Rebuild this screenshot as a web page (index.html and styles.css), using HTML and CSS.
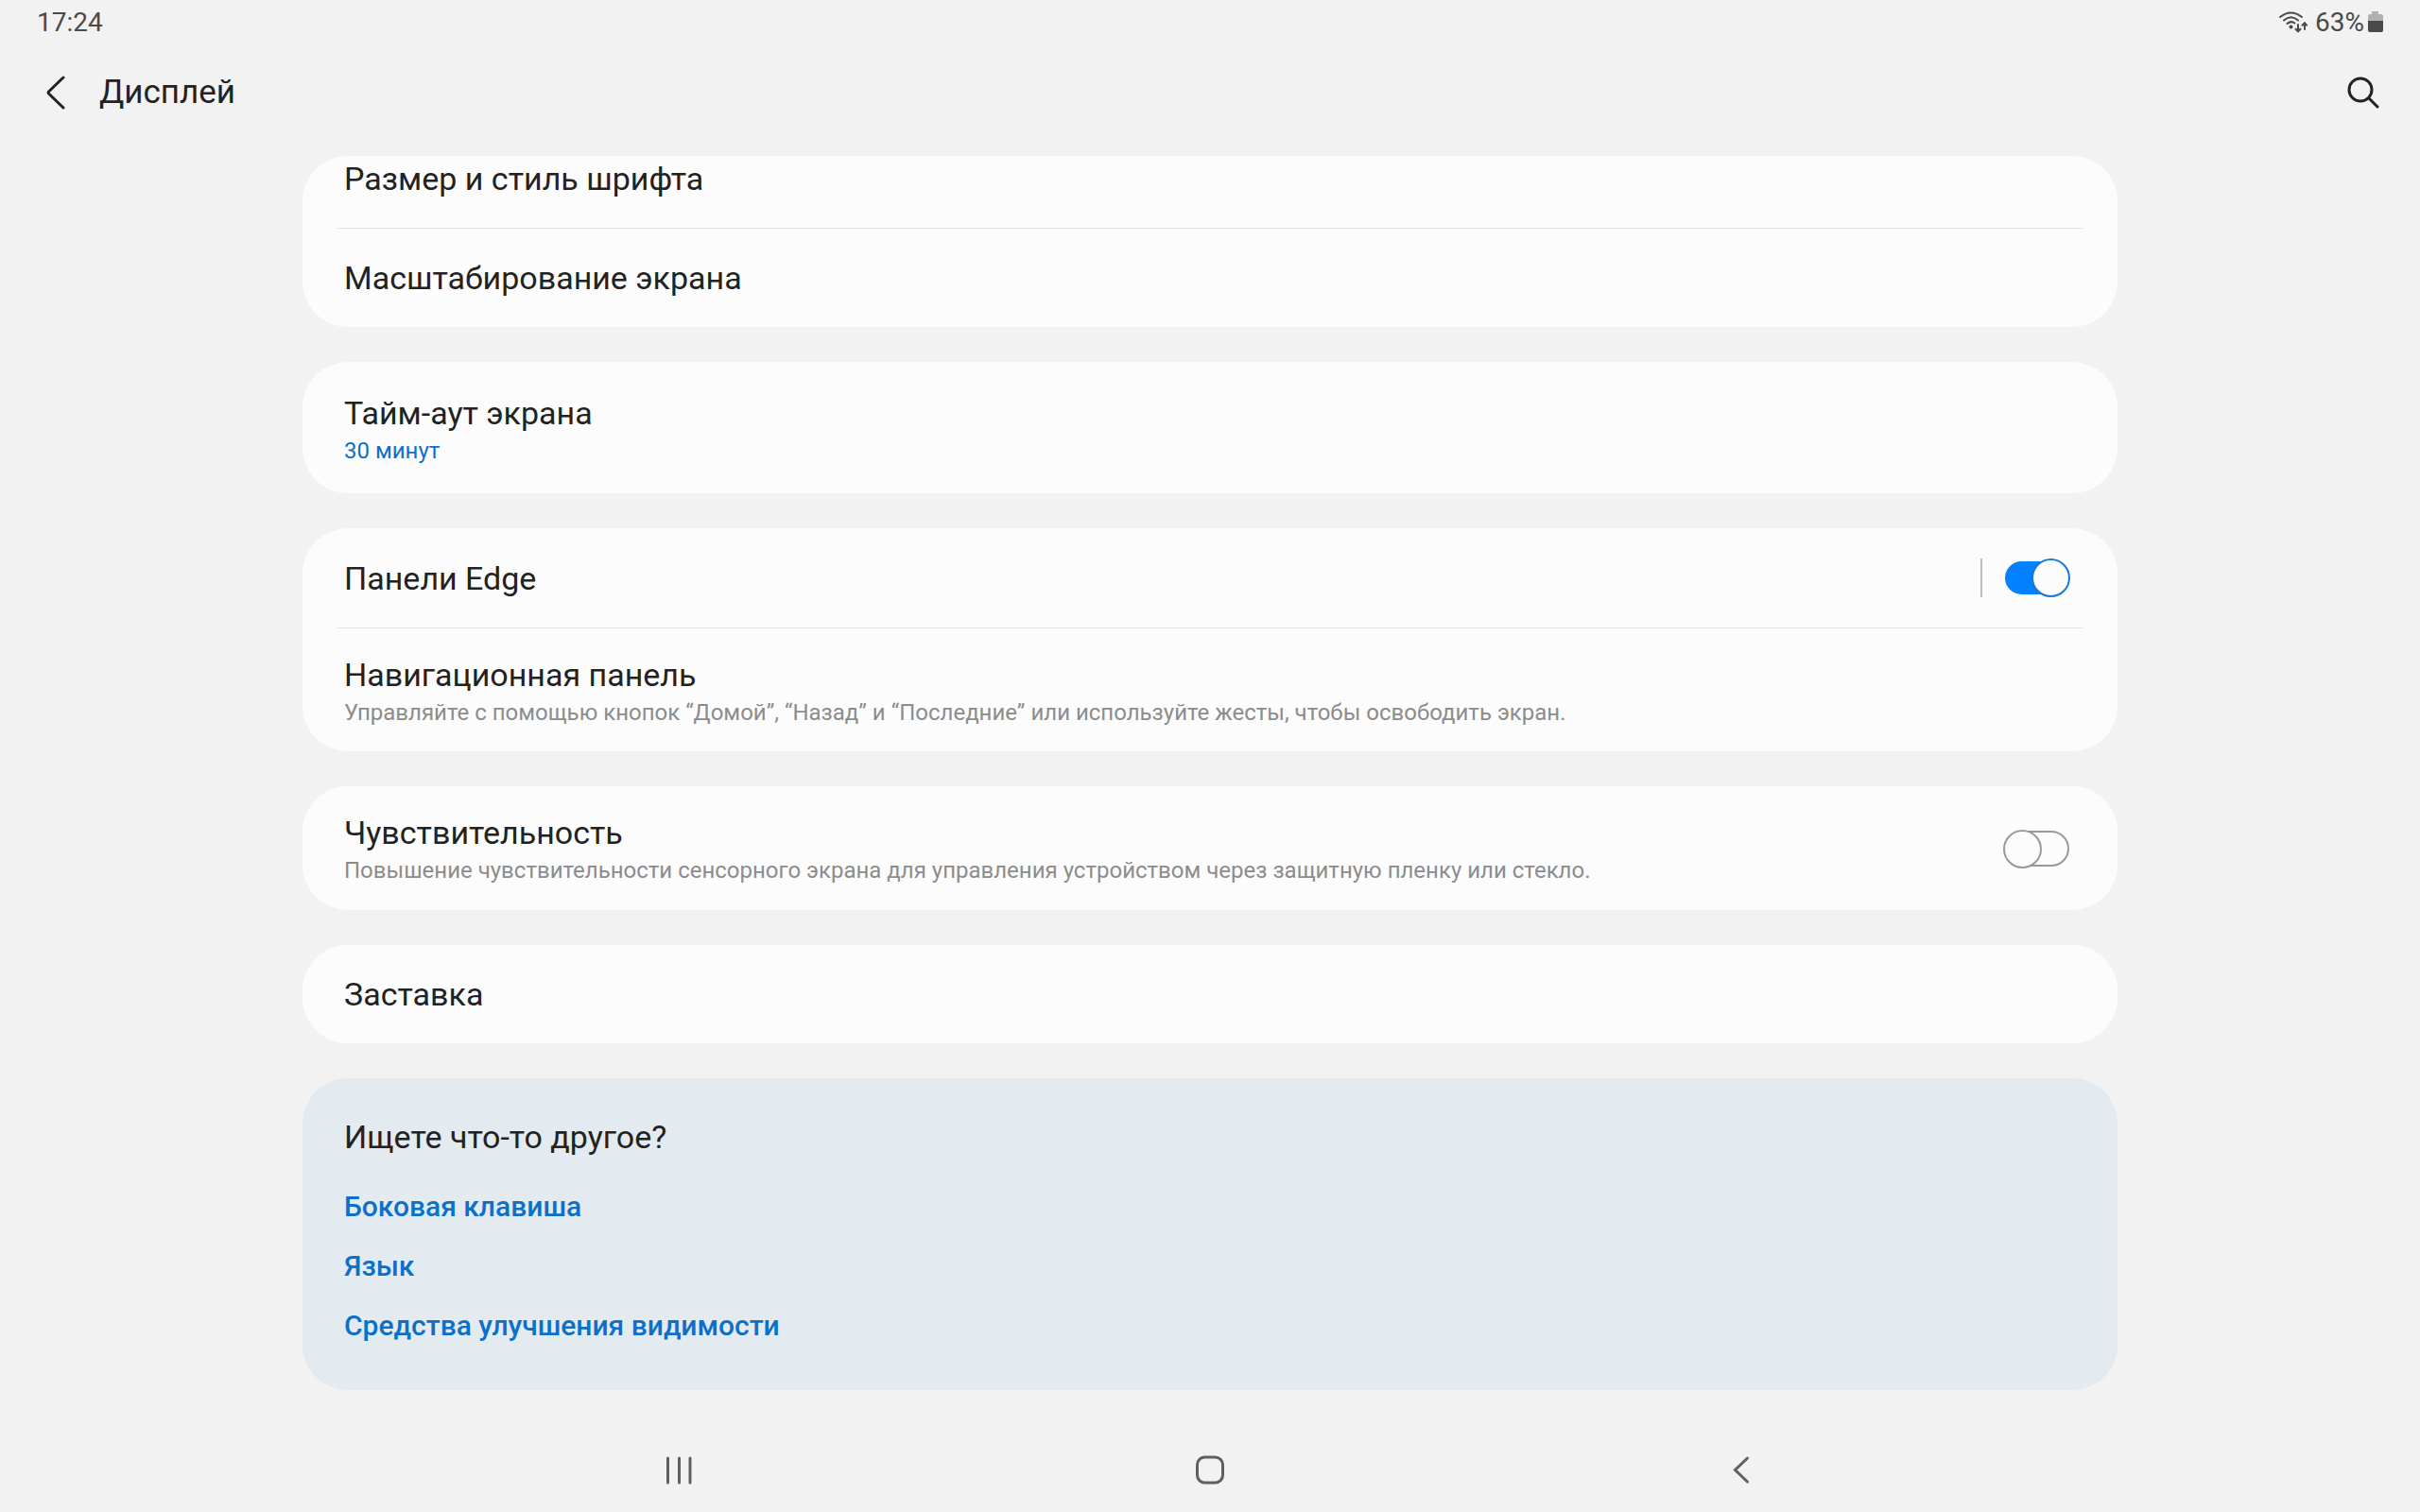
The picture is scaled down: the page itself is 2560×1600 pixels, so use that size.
FILE: index.html
```html
<!DOCTYPE html>
<html lang="ru">
<head>
<meta charset="utf-8">
<meta name="viewport" content="width=device-width, initial-scale=1">
<title>Дисплей</title>
<link rel="stylesheet" href="styles.css">
</head>
<body>
<div class="status-bar">
  <time class="clock">17:24</time>
  <div class="status-icons">
    <svg class="icon-wifi" viewBox="0 0 30 24" aria-hidden="true">
      <g fill="none" stroke="#4a4a4a" stroke-width="2" stroke-linecap="round">
        <path d="M1 6Q12.500 -3 24 6"/>
        <path d="M5 9.500Q12.500 3 20 9.500"/>
        <path d="M8.500 13Q12.500 9.500 16.500 12.500"/>
        <path d="M20 14V21M17.500 18.800L20 21.300L22.500 18.800"/>
        <path d="M27 19V12.500M24.500 14.700L27 12.200L29 14.700"/>
      </g>
      <circle cx="12.500" cy="16.500" r="2" fill="#4a4a4a"/>
    </svg>
    <span class="battery-level">63%</span>
    <svg class="icon-battery" viewBox="0 0 16 24" aria-hidden="true">
      <path d="M4 1h7v3h3q2 0 2 2v6H0V6q0-2 2-2h2z" fill="#b0b0b0"/>
      <path d="M0 11h16v10q0 2-2 2H2q-2 0-2-2z" fill="#4a4a4a"/>
    </svg>
  </div>
</div>

<header class="app-bar">
  <button class="icon-button" type="button" aria-label="Назад">
    <svg class="icon-back" viewBox="0 0 20 36" aria-hidden="true"><path d="M18 2L2.500 17Q1.500 18 2.500 19L18 34" fill="none" stroke="#222" stroke-width="3" stroke-linecap="round"/></svg>
  </button>
  <h1 class="title">Дисплей</h1>
  <button class="icon-button" type="button" aria-label="Поиск">
    <svg class="icon-search" viewBox="0 0 34 34" aria-hidden="true"><g fill="none" stroke="#222" stroke-width="3" stroke-linecap="round"><circle cx="14" cy="14" r="12"/><path d="M23 23L32 32"/></g></svg>
  </button>
</header>

<main class="settings">
  <section class="card">
    <a class="row row-scrolled" href="#font"><span class="name">Размер и стиль шрифта</span></a>
    <a class="row" href="#zoom"><span class="name">Масштабирование экрана</span></a>
  </section>

  <section class="card">
    <a class="row row-tall" href="#timeout">
      <span class="name">Тайм-аут экрана</span>
      <span class="value">30 минут</span>
    </a>
  </section>

  <section class="card">
    <div class="row row-switch">
      <label class="labels" for="edge"><span class="name">Панели Edge</span></label>
      <span class="separator"></span>
      <input class="switch" id="edge" type="checkbox" role="switch" checked>
    </div>
    <a class="row" href="#navigation">
      <span class="name">Навигационная панель</span>
      <span class="hint">Управляйте с помощью кнопок “Домой”, “Назад” и “Последние” или используйте жесты, чтобы освободить экран.</span>
    </a>
  </section>

  <section class="card">
    <div class="row row-switch">
      <label class="labels" for="touch">
        <span class="name">Чувствительность</span>
        <span class="hint">Повышение чувствительности сенсорного экрана для управления устройством через защитную пленку или стекло.</span>
      </label>
      <input class="switch" id="touch" type="checkbox" role="switch">
    </div>
  </section>

  <section class="card">
    <a class="row" href="#screensaver"><span class="name">Заставка</span></a>
  </section>

  <section class="card card-related">
    <h2 class="name">Ищете что-то другое?</h2>
    <a class="related" href="#side-key">Боковая клавиша</a>
    <a class="related" href="#language">Язык</a>
    <a class="related" href="#visibility">Средства улучшения видимости</a>
  </section>
</main>

<nav class="nav-bar">
  <button class="nav-button" type="button" aria-label="Последние">
    <svg class="icon-nav" viewBox="0 0 32 32" aria-hidden="true"><path d="M4.500 3V29M16.500 3V29M28 3V29" fill="none" stroke="#606060" stroke-width="3" stroke-linecap="round"/></svg>
  </button>
  <button class="nav-button" type="button" aria-label="Домой">
    <svg class="icon-nav" viewBox="0 0 32 32" aria-hidden="true"><rect x="2.500" y="2" width="27" height="27" rx="8" fill="none" stroke="#606060" stroke-width="3"/></svg>
  </button>
  <button class="nav-button" type="button" aria-label="Назад">
    <svg class="icon-nav" viewBox="0 0 32 32" aria-hidden="true"><path d="M22.500 3L9.500 15.500L22.500 28" fill="none" stroke="#606060" stroke-width="3" stroke-linecap="round"/></svg>
  </button>
</nav>
</body>
</html>
```
FILE: styles.css
```css
* {
  box-sizing: border-box;
}

body {
  display: flex;
  flex-direction: column;
  min-height: 100vh;
  margin: 0;
  background: #f2f2f2;
  color: #222;
  font-family: Roboto, sans-serif;
}

button {
  border: 0;
  padding: 0;
  background: none;
}

a {
  color: inherit;
  text-decoration: none;
}

.status-bar {
  display: flex;
  align-items: center;
  justify-content: space-between;
  height: 48px;
  padding: 0 39px;
  color: #4a4a4a;
  font-size: 28px;
  line-height: 32px;
}

.status-icons {
  display: flex;
  align-items: center;
}

.icon-wifi {
  width: 30px;
  height: 24px;
  margin-right: 8px;
}

.icon-battery {
  width: 16px;
  height: 24px;
  margin: 0 0 2px 4px;
}

.app-bar {
  display: flex;
  align-items: center;
  height: 100px;
  padding: 0 30px 0 29px;
}

.icon-button {
  display: flex;
  align-items: center;
  justify-content: center;
  width: 60px;
  height: 60px;
}

.icon-back {
  width: 20px;
  height: 36px;
}

.icon-search {
  width: 34px;
  height: 34px;
}

.title {
  flex: 1;
  margin: 0 0 0 16px;
  font-size: 35px;
  font-weight: 400;
  line-height: 40px;
}

.settings {
  display: flex;
  flex-direction: column;
  gap: 37px;
  margin: 17px 12.5% 0;
}

.card {
  overflow: hidden;
  border-radius: 48px;
  background: #fcfcfc;
}

.row {
  display: flex;
  flex-direction: column;
  margin: 0 37px;
  padding: 32px 7px;
}

.row:has(.hint) {
  padding-top: 29px;
  padding-bottom: 28px;
}

.row + .row {
  border-top: 1px solid #e4e4e4;
}

.row + .row:has(.hint) {
  padding-bottom: 27px;
}

/* The list is scrolled, so the first row is partly cut off by the card's edge. */
.row-scrolled {
  margin-top: -28px;
}

.row-tall {
  padding-top: 34px;
  padding-bottom: 31px;
}

.row-switch {
  flex-direction: row;
  align-items: center;
}

.labels {
  display: flex;
  flex: 1;
  flex-direction: column;
}

.name {
  margin: 0;
  font-size: 34px;
  font-weight: 400;
  line-height: 40px;
}

.value,
.hint {
  margin-top: 6px;
  font-size: 24px;
  line-height: 28px;
}

.value {
  color: #0b70c9;
}

.hint {
  color: #8c8c8c;
}

.separator {
  width: 2px;
  height: 41px;
  margin-right: 22px;
  background: #bdbdbd;
}

.switch {
  position: relative;
  width: 71px;
  height: 41px;
  margin: 0 6px 0 0;
  appearance: none;
}

.switch::before,
.switch::after {
  content: "";
  position: absolute;
  box-sizing: border-box;
  border: 2px solid #999;
  background: #fcfcfc;
}

.switch::before {
  inset: 1px 1px 2px 2px;
  border-radius: 20px;
}

.switch::after {
  top: 0;
  left: 0;
  width: 41px;
  height: 41px;
  border-radius: 50%;
}

.switch:checked::before {
  inset: 3px 2px;
  border-color: #0381fe;
  background: #0381fe;
}

.switch:checked::after {
  right: 0;
  left: auto;
  border-color: #1b78d6;
}

.card-related {
  display: flex;
  flex-direction: column;
  align-items: flex-start;
  padding: 42px 44px 37px;
  background: #e3eaf0;
}

.card-related .name {
  margin-bottom: 22px;
}

.related {
  padding: 13px 0;
  color: #0b70c9;
  font-size: 30px;
  font-weight: 500;
  line-height: 37px;
}

.nav-bar {
  display: flex;
  justify-content: center;
  gap: 500px;
  margin-top: auto;
  padding: 12px 0;
}

.nav-button {
  display: flex;
  align-items: center;
  justify-content: center;
  width: 62px;
  height: 64px;
}

.icon-nav {
  width: 32px;
  height: 32px;
}
```
